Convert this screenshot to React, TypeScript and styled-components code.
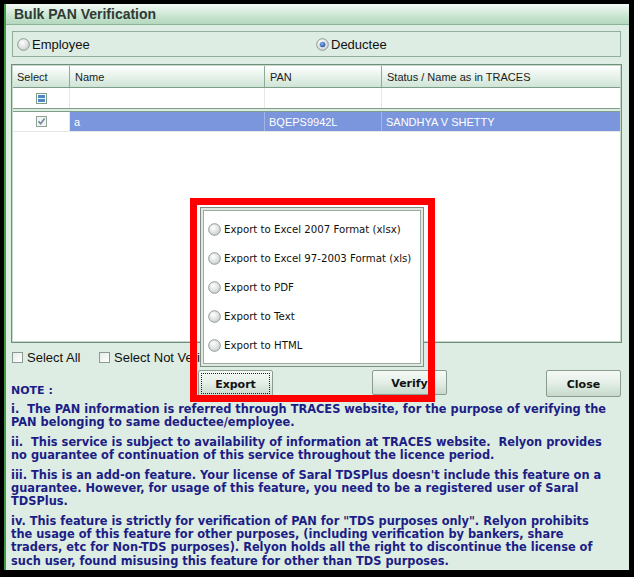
import { createGlobalStyle, styled } from "styled-components";

const GlobalStyle = createGlobalStyle`
  * {
    margin: 0;
    padding: 0;
    box-sizing: border-box;
  }
  html, body {
    background: #000;
  }
  body {
    font-family: "DejaVu Sans", Verdana, sans-serif;
  }
`;

const Frame = styled.div`
  width: 634px;
  height: 577px;
  padding: 4px 5px 7px 4px;
  background: #000;
`;

const Window = styled.div`
  height: 100%;
  display: flex;
  flex-direction: column;
  background: #deede3;
  border-left: 2px solid #3f9a48;
  overflow: hidden;
`;

const TitleBar = styled.div`
  flex-shrink: 0;
  height: 21px;
  padding-left: 8px;
  display: flex;
  align-items: center;
  background: linear-gradient(#f4faf5, #c9e5d0 60%, #b3d8be);
  border-bottom: 1px solid #8bb597;
  font-family: "Liberation Sans", Arial, sans-serif;
  font-weight: bold;
  font-size: 14px;
  color: #2f3a36;
`;

const Body = styled.div`
  flex: 1;
  display: flex;
  flex-direction: column;
  padding: 0 7px 0 5px;
  & > * {
    flex-shrink: 0;
  }
`;

const RadioBox = styled.div`
  margin: 6px 1px 0 1px;
  height: 26px;
  border: 1px solid #93ad9b;
  display: flex;
  align-items: center;
  padding-left: 4px;
`;

const RadioOption = styled.label<{ $width?: number }>`
  display: flex;
  align-items: center;
  gap: 2px;
  width: ${(p) => (p.$width ? `${p.$width}px` : "auto")};
  font-family: "Liberation Sans", Tahoma, sans-serif;
  font-size: 13px;
  color: #111;
`;

const Grid = styled.div`
  margin-top: 7px;
  height: 279px;
  border: 1px solid #6f8e7b;
  padding: 1px;
  background: #fff;
  box-shadow: inset 0 0 0 1px #c5d9cb;
  font-family: "Liberation Sans", Tahoma, sans-serif;
  font-size: 11px;
`;

const Row = styled.div`
  display: grid;
  grid-template-columns: 57px 195px 117px 1fr;
`;

const HeaderRow = styled(Row)`
  height: 22px;
  background: linear-gradient(#ffffff, #e9f3ec 45%, #cfe4d6);
  border-bottom: 1px solid #7d9d89;
`;

const HeadCell = styled.div`
  display: flex;
  align-items: center;
  padding-left: 5px;
  color: #1c1c1c;
  border-right: 1px solid #8eab97;
  &:first-child {
    padding-left: 4px;
  }
  &:last-child {
    border-right: none;
  }
`;

const FilterRow = styled(Row)`
  height: 20px;
`;

const Cell = styled.div<{ $selected?: boolean; $center?: boolean }>`
  display: flex;
  align-items: center;
  justify-content: ${(p) => (p.$center ? "center" : "flex-start")};
  padding-left: ${(p) => (p.$center ? "0" : "4px")};
  color: ${(p) => (p.$selected ? "#fff" : "#111")};
  background: ${(p) => (p.$selected ? "#7b96dc" : "#fff")};
  border-right: 1px solid ${(p) => (p.$selected ? "#a3b5e6" : "#e4e9e6")};
  &:last-child {
    border-right: none;
  }
`;

const Divider = styled.div`
  height: 4px;
  border-top: 1px solid #7f9f8b;
  border-bottom: 1px solid #7f9f8b;
  background: #dcebe1;
`;

const DataRow = styled(Row)`
  height: 20px;
  border-bottom: 1px solid #e4e9e6;
`;

const SelectRow = styled.div`
  height: 27px;
  display: flex;
  align-items: center;
  padding: 1px 0 0 1px;
`;

const CheckLabel = styled.label<{ $width?: number }>`
  display: flex;
  align-items: center;
  gap: 4px;
  width: ${(p) => (p.$width ? `${p.$width}px` : "auto")};
  font-family: "Liberation Sans", Tahoma, sans-serif;
  font-size: 13px;
  color: #111;
  white-space: nowrap;
`;

const Box = styled.span`
  width: 11px;
  height: 11px;
  border: 1px solid #8c9b92;
  background: linear-gradient(135deg, #e8ece9, #ffffff);
  display: inline-block;
`;

const ButtonRow = styled.div`
  height: 27px;
  display: flex;
  align-items: flex-start;
`;

const NoteLabel = styled.div`
  width: 187px;
  align-self: flex-end;
  font-weight: bold;
  font-size: 11px;
  line-height: 13px;
  color: #1d1d86;
`;

const Button = styled.button<{ $h?: number; $focus?: boolean }>`
  width: 75px;
  height: ${(p) => p.$h ?? 27}px;
  border: 1px solid #8a9c90;
  border-radius: 2px;
  background: linear-gradient(#f6faf7, #e3eee6 50%, #c6d9cb);
  font-family: "DejaVu Sans", Verdana, sans-serif;
  font-weight: bold;
  font-size: 11px;
  color: #111;
  padding-top: 2px;
  outline: ${(p) => (p.$focus ? "1px dotted #222" : "none")};
  outline-offset: -4px;
`;

const ExportAnchor = styled.div`
  position: relative;
  margin-right: 99px;
`;

const Popup = styled.div`
  position: absolute;
  left: 2px;
  top: -163px;
  width: 224px;
  height: 160px;
  border: 1px solid #7e8e83;
  padding: 2px;
  background: #dfe9e2;
`;

const PopupList = styled.div`
  height: 100%;
  border: 1px solid #9aab9f;
  background: #fff;
  display: flex;
  flex-direction: column;
  padding: 4px 0 0 4px;
`;

const PopupOption = styled.div`
  height: 29px;
  flex-shrink: 0;
  display: flex;
  align-items: center;
  gap: 3px;
  font-family: "DejaVu Sans", Verdana, sans-serif;
  font-size: 10.2px;
  color: #111;
  white-space: nowrap;
`;

const RedMark = styled.div`
  position: absolute;
  left: -8px;
  top: -172px;
  width: 245px;
  height: 204px;
  border: 7px solid #ff0000;
  pointer-events: none;
`;

const Notes = styled.div`
  margin-top: 6px;
  display: flex;
  flex-direction: column;
  gap: 6.5px;
  font-weight: bold;
  font-size: 11.4px;
  line-height: 13.2px;
  color: #1d1d86;
`;

const Note = styled.p``;

const NoteLine = styled.span`
  display: block;
  white-space: pre;
`;

const Radio = ({ checked = false }: { checked?: boolean }) => (
  <svg width="13" height="13" viewBox="0 0 13 13">
    <defs>
      <radialGradient id="rg" cx="0.4" cy="0.35" r="0.7">
        <stop offset="0" stopColor="#ffffff" />
        <stop offset="1" stopColor="#c9d0cc" />
      </radialGradient>
      <radialGradient id="dot" cx="0.4" cy="0.35" r="0.7">
        <stop offset="0" stopColor="#8fb4f0" />
        <stop offset="1" stopColor="#1f4f9e" />
      </radialGradient>
    </defs>
    <circle cx="6.5" cy="6.5" r="5.8" fill="url(#rg)" stroke="#8f9a94" strokeWidth="1" />
    {checked && <circle cx="6.5" cy="6.5" r="2.8" fill="url(#dot)" />}
  </svg>
);

const MinusBox = () => (
  <svg width="11" height="11" viewBox="0 0 11 11">
    <rect x="0.5" y="0.5" width="10" height="10" fill="#fff" stroke="#7e9a88" />
    <rect x="2" y="2" width="7" height="7" fill="#4f86c6" />
    <rect x="2" y="5" width="7" height="1" fill="#e8f0fb" />
  </svg>
);

const CheckedBox = () => (
  <svg width="11" height="11" viewBox="0 0 11 11">
    <rect x="0.5" y="0.5" width="10" height="10" fill="#f2f4f3" stroke="#8fa395" />
    <path d="M2.5 5.2 L4.6 7.8 L8.6 2.6" fill="none" stroke="#7484a0" strokeWidth="1.6" />
  </svg>
);

const exportOptions = [
  "Export to Excel 2007 Format (xlsx)",
  "Export to Excel 97-2003 Format (xls)",
  "Export to PDF",
  "Export to Text",
  "Export to HTML",
];

// wrapped the way the original dialog wraps them
const notes = [
  [
    "i.  The PAN information is referred through TRACES website, for the purpose of verifying the",
    "PAN belonging to same deductee/employee.",
  ],
  [
    "ii.  This service is subject to availability of information at TRACES website.  Relyon provides",
    "no guarantee of continuation of this service throughout the licence period.",
  ],
  [
    "iii. This is an add-on feature. Your license of Saral TDSPlus doesn't include this feature on a",
    "guarantee. However, for usage of this feature, you need to be a registered user of Saral",
    "TDSPlus.",
  ],
  [
    'iv. This feature is strictly for verification of PAN for "TDS purposes only". Relyon prohibits',
    "the usage of this feature for other purposes, (including verification by bankers, share",
    "traders, etc for Non-TDS purposes). Relyon holds all the right to discontinue the license of",
    "such user, found misusing this feature for other than TDS purposes.",
  ],
];

function App() {
  return (
    <>
      <GlobalStyle />
      <Frame>
        <Window>
          <TitleBar>Bulk PAN Verification</TitleBar>
          <Body>
            <RadioBox>
              <RadioOption $width={299}>
                <Radio />
                Employee
              </RadioOption>
              <RadioOption>
                <Radio checked />
                Deductee
              </RadioOption>
            </RadioBox>

            <Grid>
              <HeaderRow>
                <HeadCell>Select</HeadCell>
                <HeadCell>Name</HeadCell>
                <HeadCell>PAN</HeadCell>
                <HeadCell>Status / Name as in TRACES</HeadCell>
              </HeaderRow>
              <FilterRow>
                <Cell $center>
                  <MinusBox />
                </Cell>
                <Cell />
                <Cell />
                <Cell />
              </FilterRow>
              <Divider />
              <DataRow>
                <Cell $center>
                  <CheckedBox />
                </Cell>
                <Cell $selected>a</Cell>
                <Cell $selected>BQEPS9942L</Cell>
                <Cell $selected>SANDHYA V SHETTY</Cell>
              </DataRow>
            </Grid>

            <SelectRow>
              <CheckLabel $width={87}>
                <Box />
                Select All
              </CheckLabel>
              <CheckLabel>
                <Box />
                Select Not Verified
              </CheckLabel>
            </SelectRow>

            <ButtonRow>
              <NoteLabel>NOTE :</NoteLabel>
              <ExportAnchor>
                <Popup>
                  <PopupList>
                    {exportOptions.map((o) => (
                      <PopupOption key={o}>
                        <Radio />
                        {o}
                      </PopupOption>
                    ))}
                  </PopupList>
                </Popup>
                <Button $focus>Export</Button>
                <RedMark />
              </ExportAnchor>
              <Button $h={25} style={{ marginRight: 99 }}>
                Verify
              </Button>
              <Button>Close</Button>
            </ButtonRow>

            <Notes>
              {notes.map((lines) => (
                <Note key={lines[0]}>
                  {lines.map((l) => (
                    <NoteLine key={l}>{l}</NoteLine>
                  ))}
                </Note>
              ))}
            </Notes>
          </Body>
        </Window>
      </Frame>
    </>
  );
}

export default App;
